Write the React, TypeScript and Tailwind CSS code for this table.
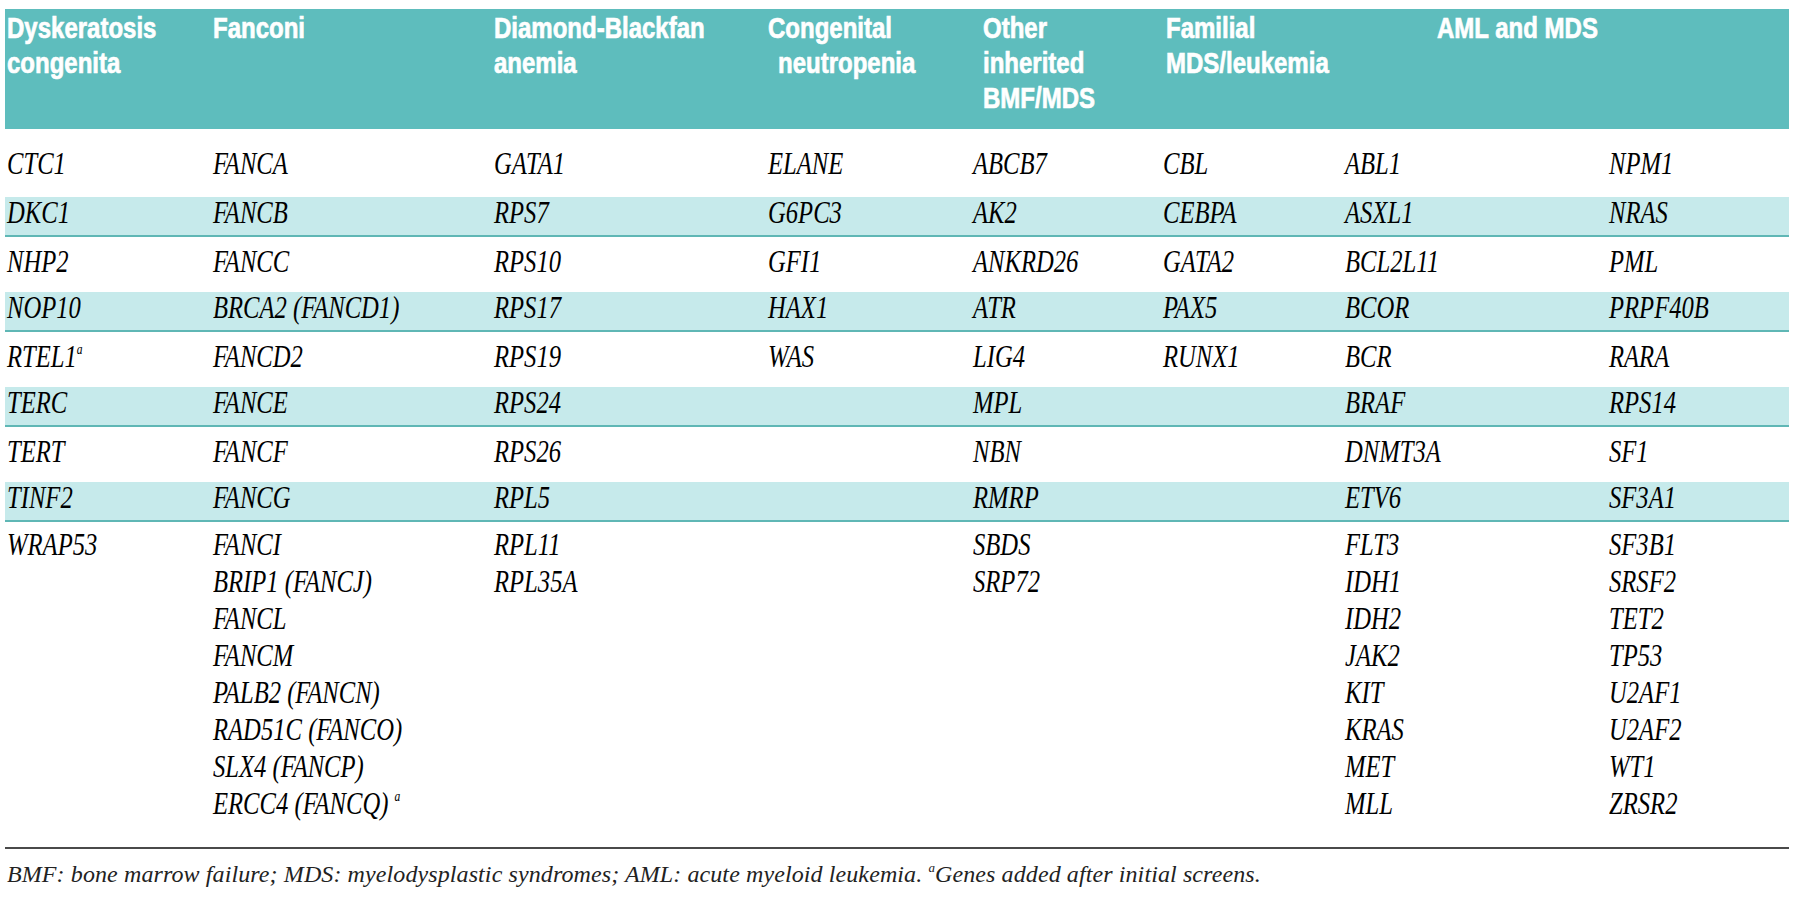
import React from 'react';

const grid = "grid grid-cols-[206px_281px_274px_205px_190px_182px_264px_180px] pl-[2px]";

const Gene = ({ children }: { children: React.ReactNode }) => (
  <span className="inline-block origin-left scale-x-[0.77] whitespace-nowrap">{children}</span>
);

const Head = ({ children }: { children: React.ReactNode }) => (
  <div>
    <span className="inline-block origin-left scale-x-[0.8] whitespace-nowrap">{children}</span>
  </div>
);

const Sup = () => <sup className="text-[15px] top-[-0.9em]">a</sup>;

const rows: React.ReactNode[][] = [
  ["CTC1", "FANCA", "GATA1", "ELANE", "ABCB7", "CBL", "ABL1", "NPM1"],
  ["DKC1", "FANCB", "RPS7", "G6PC3", "AK2", "CEBPA", "ASXL1", "NRAS"],
  ["NHP2", "FANCC", "RPS10", "GFI1", "ANKRD26", "GATA2", "BCL2L11", "PML"],
  ["NOP10", "BRCA2 (FANCD1)", "RPS17", "HAX1", "ATR", "PAX5", "BCOR", "PRPF40B"],
  [<>RTEL1<Sup /></>, "FANCD2", "RPS19", "WAS", "LIG4", "RUNX1", "BCR", "RARA"],
  ["TERC", "FANCE", "RPS24", "", "MPL", "", "BRAF", "RPS14"],
  ["TERT", "FANCF", "RPS26", "", "NBN", "", "DNMT3A", "SF1"],
  ["TINF2", "FANCG", "RPL5", "", "RMRP", "", "ETV6", "SF3A1"],
];

const lastRow: React.ReactNode[][] = [
  ["WRAP53"],
  ["FANCI", "BRIP1 (FANCJ)", "FANCL", "FANCM", "PALB2 (FANCN)", "RAD51C (FANCO)", "SLX4 (FANCP)", <>ERCC4 (FANCQ) <Sup /></>],
  ["RPL11", "RPL35A"],
  [],
  ["SBDS", "SRP72"],
  [],
  ["FLT3", "IDH1", "IDH2", "JAK2", "KIT", "KRAS", "MET", "MLL"],
  ["SF3B1", "SRSF2", "TET2", "TP53", "U2AF1", "U2AF2", "WT1", "ZRSR2"],
];

export default function App() {
  return (
    <div className="min-h-screen bg-white">
      <div className="ml-[5px] w-[1784px] pt-[9px]">
        {/* header band */}
        <div className={`${grid} h-[120px] bg-[#5ebdbd] pt-[1px] font-['Liberation_Sans',sans-serif] text-[30px] font-bold leading-[35px] text-white [-webkit-text-stroke:0.7px_white]`}>
          <div>
            <Head>Dyskeratosis</Head>
            <Head>congenita</Head>
          </div>
          <div>
            <Head>Fanconi</Head>
          </div>
          <div>
            <Head>Diamond-Blackfan</Head>
            <Head>anemia</Head>
          </div>
          <div>
            <Head>Congenital</Head>
            <div className="pl-[10px]">
              <span className="inline-block origin-left scale-x-[0.8] whitespace-nowrap">neutropenia</span>
            </div>
          </div>
          <div className="pl-[10px]">
            <Head>Other</Head>
            <Head>inherited</Head>
            <Head>BMF/MDS</Head>
          </div>
          <div className="pl-[3px]">
            <Head>Familial</Head>
            <Head>MDS/leukemia</Head>
          </div>
          <div className="col-span-2 pl-[92px]">
            <Head>AML and MDS</Head>
          </div>
        </div>

        {/* body */}
        <div className="font-['Liberation_Serif',serif] text-[32px] italic leading-[31px] text-black">
          {rows.map((r, i) => {
            const band = i % 2 === 1;
            const cls =
              i === 0
                ? "h-[68px] pt-[19px]"
                : band
                ? "h-[40px] bg-[#c6eaeb] border-b-2 border-[#5fb7b5]"
                : "h-[55px] pt-[9px]";
            return (
              <div key={i} className={`${grid} ${cls}`}>
                {r.map((c, j) => (
                  <div key={j}>{c ? <Gene>{c}</Gene> : null}</div>
                ))}
              </div>
            );
          })}
          <div className={`${grid} pt-[4px] leading-[37px]`}>
            {lastRow.map((col, j) => (
              <div key={j}>
                {col.map((g, k) => (
                  <div key={k}>
                    <Gene>{g}</Gene>
                  </div>
                ))}
              </div>
            ))}
          </div>
        </div>

        {/* footnote */}
        <div className="mt-[25px] h-[2px] bg-[#4a4a4a]" />
        <p className="mt-[12px] pl-[2px] font-['Liberation_Serif',serif] text-[24px] italic leading-[26px] tracking-[0.1px] text-[#222]">
          BMF: bone marrow failure; MDS: myelodysplastic syndromes; AML: acute myeloid leukemia.{" "}
          <sup className="text-[13px] top-[-0.8em]">a</sup>Genes added after initial screens.
        </p>
      </div>
    </div>
  );
}
